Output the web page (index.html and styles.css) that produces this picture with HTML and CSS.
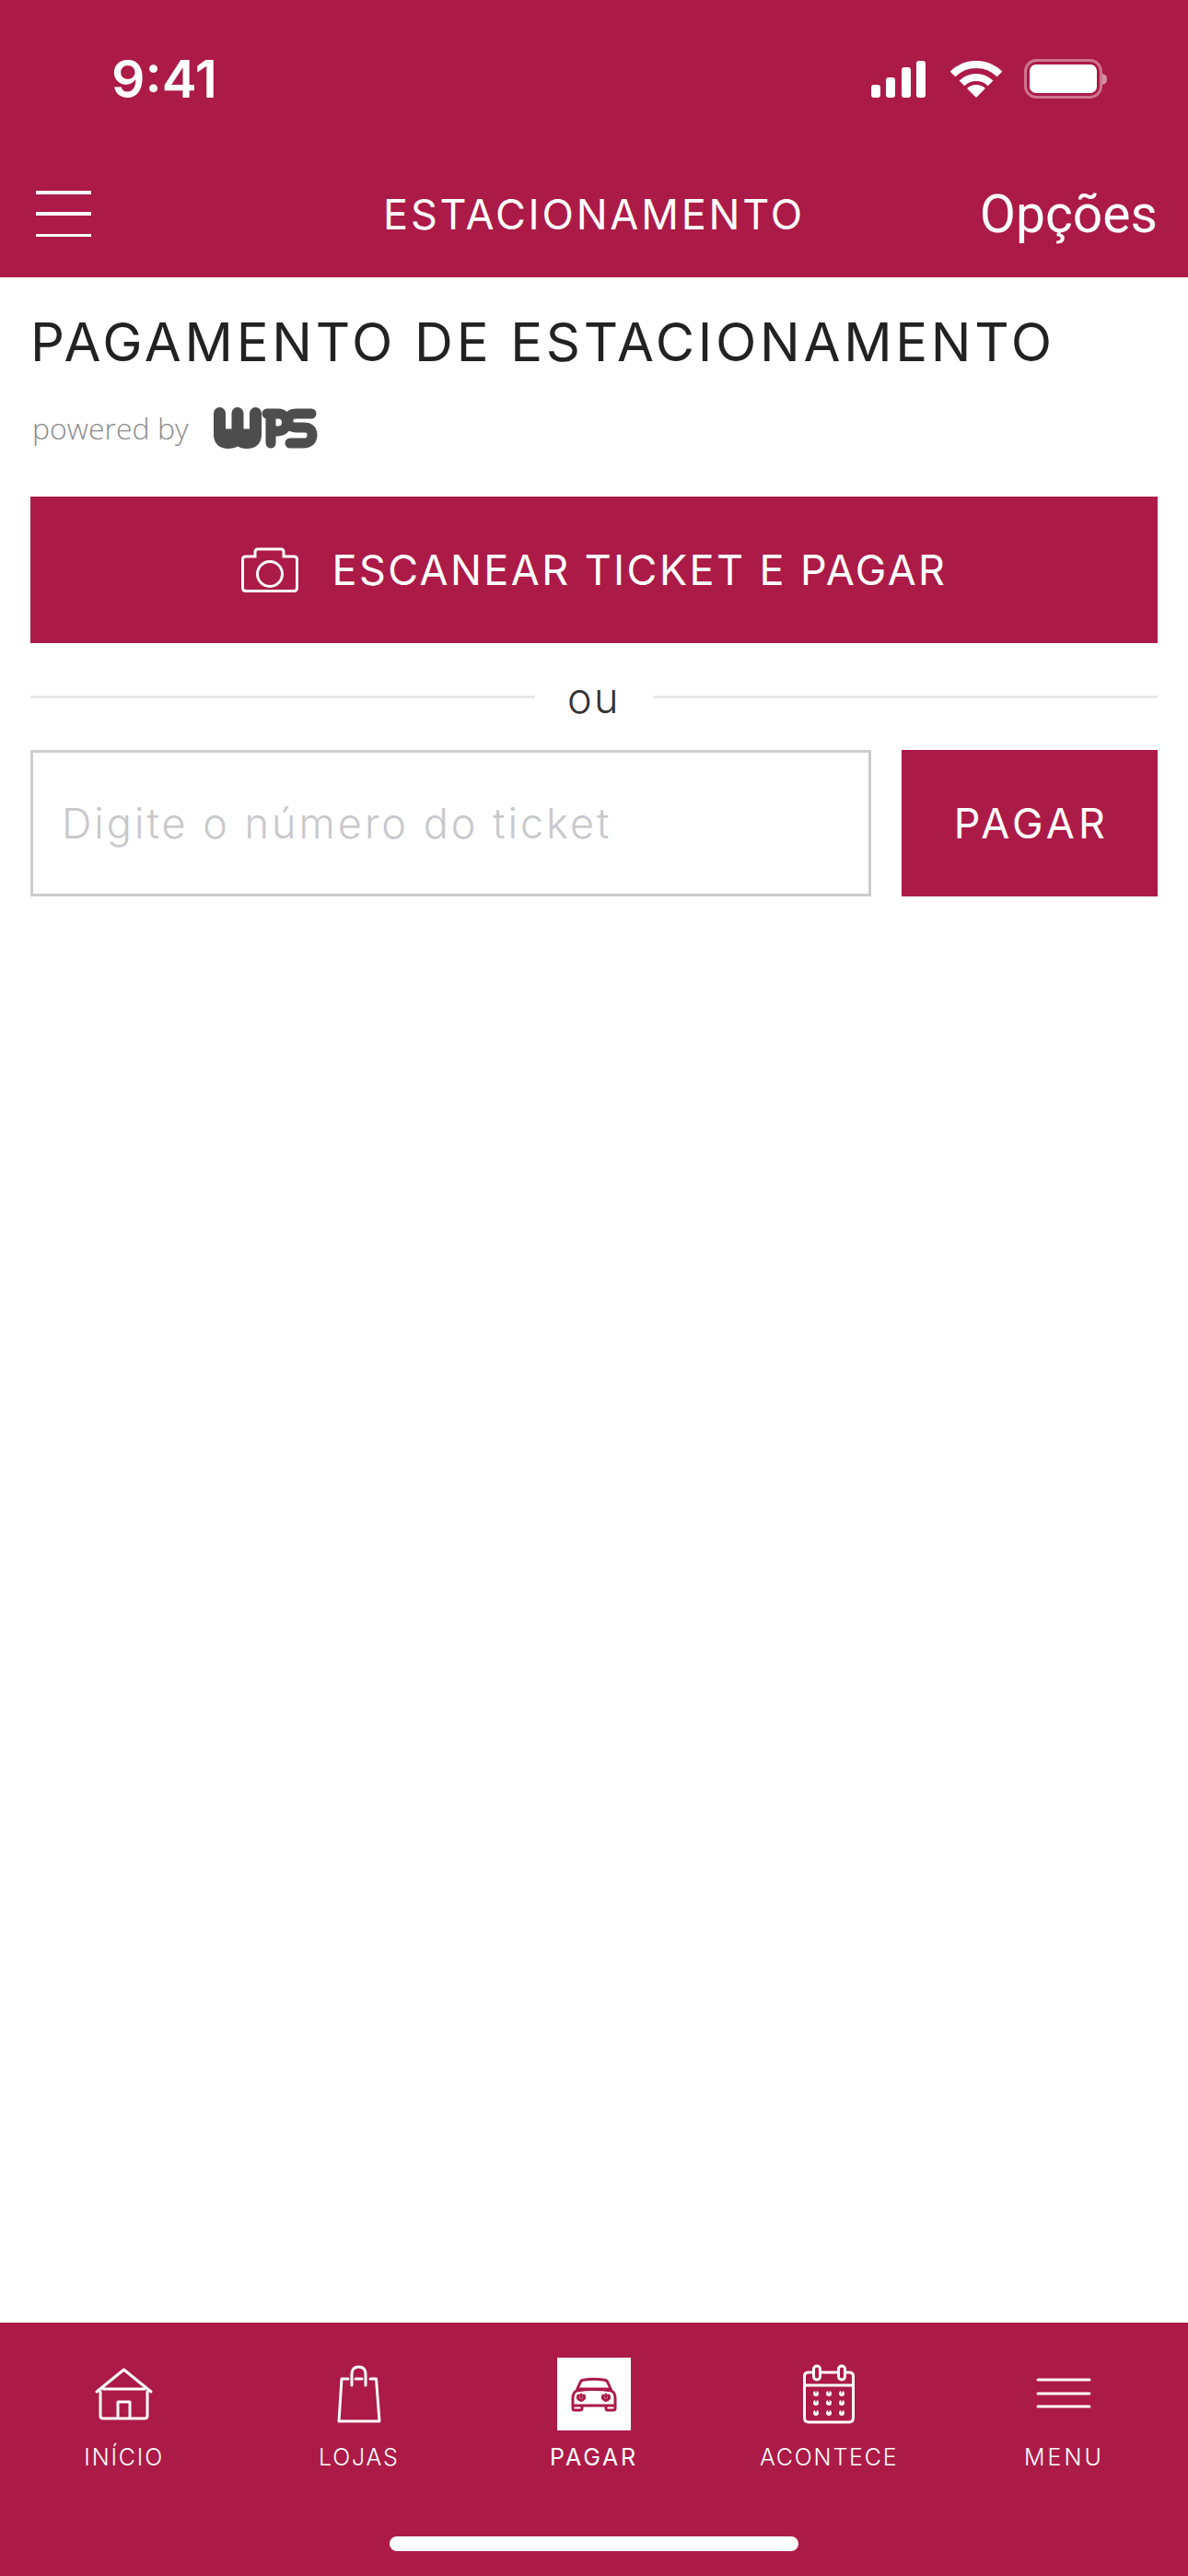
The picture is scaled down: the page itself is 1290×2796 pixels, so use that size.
FILE: index.html
```html
<!DOCTYPE html>
<html lang="pt-BR">

<head>
    <meta charset="utf-8" />
    <title>Estacionamento</title>
    <link rel="stylesheet" href="styles.css">
</head>

<body>
    <header class="top">
        <div class="status-bar">
            <span class="clock">9:41</span>
            <div class="status-icons">
                <svg class="signal" width="59" height="40" viewBox="0 0 59 40">
                    <rect x="0" y="26" width="10" height="14" rx="3" />
                    <rect x="16" y="18" width="10" height="22" rx="3" />
                    <rect x="33" y="7" width="10" height="33" rx="3" />
                    <rect x="49" y="0" width="10" height="40" rx="3" />
                </svg>
                <svg class="wifi" width="56" height="40" viewBox="0 0 56 40">
                    <path d="M2.5 14.5A36 36 0 0 1 53.5 14.5M12.4 24.4A22 22 0 0 1 43.6 24.4" />
                    <path class="wifi-core" d="M28 40L18.1 30.1A14 14 0 0 1 37.9 30.1Z" />
                </svg>
                <svg class="battery" width="90" height="43" viewBox="0 0 90 43">
                    <rect class="battery-case" x="1.5" y="1.5" width="82" height="40" rx="12" />
                    <rect x="6" y="6" width="73" height="31" rx="7" />
                    <path class="battery-nub" d="M85 16C89 17 90 19 90 22C90 25 89 27 85 28Z" />
                </svg>
            </div>
        </div>
        <nav class="nav-bar">
            <div class="hamburger"><span></span><span></span><span></span></div>
            <div class="nav-title">ESTACIONAMENTO</div>
            <div class="nav-action">Opções</div>
        </nav>
    </header>

    <main class="content">
        <h1 class="page-title">PAGAMENTO DE ESTACIONAMENTO</h1>
        <div class="powered">
            <span class="powered-text">powered by</span>
            <svg class="wps-logo" width="113" height="45" viewBox="0 0 113 45" aria-label="WPS">
                <path class="wps-w" d="M6.500 6.500V30Q6.500 38.500 16 38.500Q26 38.500 26 30V6.500M26 30Q26 38.500 36 38.500Q45.500 38.500 45.500 30V6.500M6.500 30H45.500" />
                <path d="M58 7H70A9.500 9.500 0 0 1 70 26H62M62 7V39" />
                <path d="M106 7H90Q81 7 81 14.500Q81 22 90 22H98Q107 22 107 30Q107 39 97 39H83" />
            </svg>
        </div>

        <button class="btn btn-scan" type="button">
            <svg width="62" height="49" viewBox="0 0 62 49">
                <path d="M5 10H15V5Q15 2 18 2H43Q46 2 46 5V10H57Q60.500 10 60.500 13V44Q60.500 47.500 57 47.500H5Q1.500 47.500 1.500 44V13Q1.500 10 5 10Z" />
                <circle cx="31" cy="29" r="13.500" />
            </svg>
            <span class="btn-scan-text">ESCANEAR TICKET E PAGAR</span>
        </button>

        <div class="divider">
            <span class="divider-line"></span>
            <span class="divider-text">ou</span>
            <span class="divider-line"></span>
        </div>

        <div class="ticket-row">
            <input class="ticket-input" type="text" placeholder="Digite o número do ticket" />
            <button class="btn btn-pay" type="button">PAGAR</button>
        </div>
    </main>

    <footer class="tabbar">
        <div class="tabs">
            <div class="tab">
                <svg class="tab-icon" viewBox="0 0 80 79">
                    <path d="M10 37L39.500 13L69 37M17 34H62M14 37V63Q14 66 17 66H62Q65 66 65 63V37M33 66V48H46V66" />
                </svg>
                <span class="tab-label">INÍCIO</span>
            </div>
            <div class="tab">
                <svg class="tab-icon" viewBox="0 0 80 79">
                    <path d="M28 23H21L18 69H62L58.500 23H52M36 23H43M32 30V18Q32 10 39.500 10Q47 10 47 18V30" />
                </svg>
                <span class="tab-label">LOJAS</span>
            </div>
            <div class="tab tab-active">
                <svg class="tab-icon" viewBox="0 0 80 79">
                    <path d="M21 36L25 27Q26 24 30 24Q40 22.500 50 24Q54 24 55 27L59 36M25 34H55M21 36Q17 38 17 44V55Q17 57 19 57H25Q27 57 27 55V52H53V55Q53 57 55 57H61Q63 57 63 55V44Q63 38 59 36Q40 33 21 36ZM17 52H63" />
                    <path d="M23 41A3.500 3.500 0 1 0 29 41M26 40V43M50 41A3.500 3.500 0 1 0 56 41M53 40V43" />
                </svg>
                <span class="tab-label">PAGAR</span>
            </div>
            <div class="tab">
                <svg class="tab-icon" viewBox="0 0 80 79">
                    <path d="M23.500 16H18Q13.500 16 13.500 20V65Q13.500 70 18 70H62Q66.500 70 66.500 65V20Q66.500 16 62 16H57.500M30.500 16H50.500M13.500 30H66.500" />
                    <rect x="23.500" y="9" width="7" height="15" rx="3.500" />
                    <rect x="50.500" y="9" width="7" height="15" rx="3.500" />
                    <g class="cal-dots">
                        <circle cx="26" cy="39" r="3" /><circle cx="40" cy="39" r="3" /><circle cx="54" cy="39" r="3" />
                        <circle cx="26" cy="49" r="3" /><circle cx="40" cy="49" r="3" /><circle cx="54" cy="49" r="3" />
                        <circle cx="26" cy="60" r="3" /><circle cx="40" cy="60" r="3" /><circle cx="54" cy="60" r="3" />
                    </g>
                    <path class="cal-notch" d="M26 36V38M40 36V38M54 36V38M26 46V48M40 46V48M54 46V48M26 57V59M40 57V59M54 57V59" />
                </svg>
                <span class="tab-label">ACONTECE</span>
            </div>
            <div class="tab">
                <svg class="tab-icon" viewBox="0 0 80 79">
                    <path d="M12 24H68M12 39H68M12 53H68" />
                </svg>
                <span class="tab-label tab-label-wide">MENU</span>
            </div>
        </div>
        <div class="home-indicator"></div>
    </footer>
</body>

</html>
```

FILE: styles.css
```css
* {
    box-sizing: border-box;
}

body {
    margin: 0;
    height: 2796px;
    display: flex;
    flex-direction: column;
    background-color: #fff;
    font-family: Inter, "Open Sans", sans-serif;
    color: #222;
}

/* top bar */
.top {
    background-color: #ac1a47;
    color: #fff;
}

.status-bar {
    height: 171px;
    padding: 0 88px 0 121px;
    display: flex;
    align-items: center;
    justify-content: space-between;
}

.clock {
    font-size: 57px;
    font-weight: 600;
}

.status-icons {
    display: flex;
    align-items: center;
    gap: 27px;
}

.status-icons svg {
    display: block;
    fill: #fff;
}

.wifi {
    margin-right: -3px;
}

.wifi path {
    fill: none;
    stroke: #fff;
    stroke-width: 8;
}

.wifi .wifi-core {
    fill: #fff;
    stroke: none;
}

.battery-case {
    fill: none;
    stroke: #fff;
    stroke-width: 3;
    opacity: 0.4;
}

.battery-nub {
    opacity: 0.5;
}

.nav-bar {
    height: 130px;
    padding: 0 33px 8px;
    display: grid;
    grid-template-columns: 1fr auto 1fr;
    align-items: center;
}

.hamburger {
    margin-left: 6px;
    width: 60px;
    height: 50px;
    display: flex;
    flex-direction: column;
    justify-content: space-between;
}

.hamburger span {
    height: 3.500px;
    background-color: #fff;
}

.nav-title {
    font-size: 45px;
    font-weight: 400;
    letter-spacing: 2.800px;
}

.nav-action {
    justify-self: end;
    font-family: Roboto, sans-serif;
    font-size: 57px;
    font-weight: 400;
}

/* page */
.content {
    flex: 1;
    padding: 36px 33px 0;
}

.page-title {
    margin: 0;
    font-size: 58px;
    line-height: 68px;
    font-weight: 400;
    letter-spacing: 3.700px;
    white-space: nowrap;
}

.powered {
    margin-top: 37px;
    height: 45px;
    padding-left: 2px;
    display: flex;
    align-items: center;
    gap: 27px;
}

.powered-text {
    font-family: "Open Sans", sans-serif;
    font-size: 32px;
    font-weight: 300;
    color: #8c8c8c;
}

.wps-logo {
    fill: none;
    stroke: #4d4d4d;
    stroke-width: 11;
    stroke-linecap: round;
    stroke-linejoin: round;
}

.wps-logo .wps-w {
    stroke-width: 13;
}

.btn {
    border: none;
    border-radius: 0;
    padding: 0;
    background-color: #ac1a47;
    color: #fff;
    font-family: inherit;
    font-size: 45px;
    font-weight: 400;
    letter-spacing: 2.400px;
}

.btn-scan {
    margin-top: 52px;
    width: 100%;
    height: 159px;
    display: flex;
    align-items: center;
    justify-content: center;
    gap: 37px;
}

.btn-scan svg {
    fill: none;
    stroke: #fff;
    stroke-width: 3;
}

.divider {
    height: 116px;
    display: flex;
    align-items: center;
}

.divider-line {
    flex: 1;
    height: 3px;
    background-color: #e8e8e8;
}

.divider-text {
    width: 128px;
    padding-top: 3px;
    text-align: center;
    font-size: 45px;
    font-weight: 300;
    letter-spacing: 2.500px;
    color: #333;
}

.ticket-row {
    display: flex;
    gap: 33px;
    height: 159px;
}

.ticket-input {
    flex: 1;
    min-width: 0;
    border: 3px solid #ccc;
    border-radius: 0;
    padding: 0 0 0 31px;
    outline: none;
    font-family: inherit;
    font-size: 45px;
    font-weight: 300;
    letter-spacing: 3px;
}

.ticket-input::placeholder {
    color: #c8c8cc;
    opacity: 1;
}

.btn-pay {
    width: 278px;
    padding-left: 4px;
    letter-spacing: 4.200px;
}

/* bottom tabs */
.tabbar {
    height: 275px;
    padding: 38px 7px 27px;
    display: flex;
    flex-direction: column;
    background-color: #ac1a47;
    color: #fff;
}

.tabs {
    display: flex;
}

.tab {
    flex: 1;
    display: flex;
    flex-direction: column;
    align-items: center;
}

.tab-icon {
    display: block;
    width: 80px;
    height: 79px;
    fill: none;
    stroke: #fff;
    stroke-width: 3;
    stroke-linecap: round;
    stroke-linejoin: round;
}

.tab-active .tab-icon {
    background-color: #fff;
    stroke: #ac1a47;
}

.cal-dots {
    fill: #fff;
    stroke: none;
}

.tab-icon .cal-notch {
    stroke: #ac1a47;
    stroke-width: 1.500;
    stroke-linecap: butt;
}

.tab-label {
    margin-top: 14px;
    font-size: 25px;
    line-height: 30px;
    font-weight: 300;
    letter-spacing: 1.800px;
}

.tab-active .tab-label {
    font-weight: 400;
    letter-spacing: 2.800px;
}

.tab-label-wide {
    letter-spacing: 3px;
}

.home-indicator {
    margin: auto auto 0;
    width: 444px;
    height: 16px;
    border-radius: 8px;
    background-color: #fff;
}
```
